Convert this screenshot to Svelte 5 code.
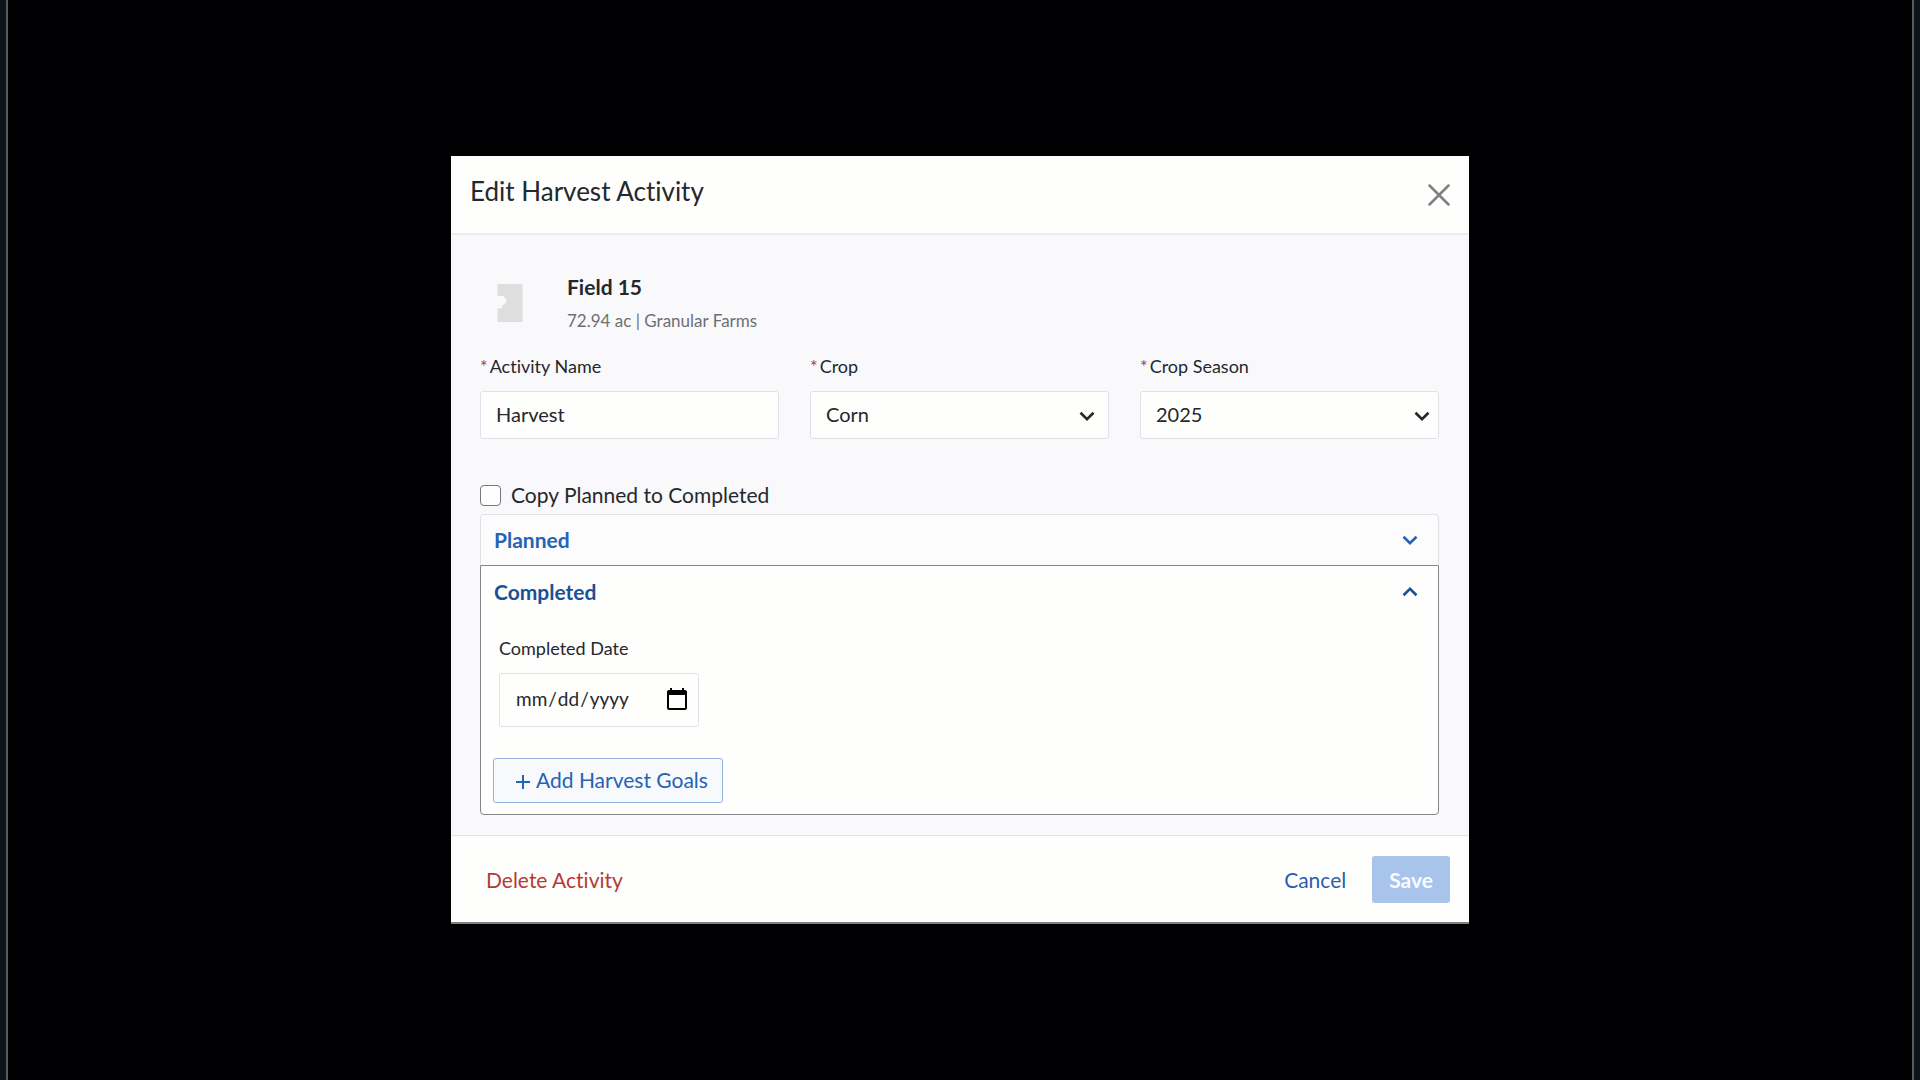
<script lang="ts">
  interface Props {
    fieldName?: string;
    fieldDetails?: string;
    onClose?: () => void;
    onSave?: () => void;
    onDelete?: () => void;
  }

  let {
    fieldName = "Field 15",
    fieldDetails = "72.94 ac | Granular Farms",
    onClose,
    onSave,
    onDelete,
  }: Props = $props();

  const crops = ["Corn", "Soybeans", "Wheat"];
  const seasons = ["2024", "2025", "2026"];

  let activityName = $state("Harvest");
  let crop = $state("Corn");
  let season = $state("2025");
  let copyPlanned = $state(false);
  let completedDate = $state("");
  let openSection = $state("completed");

  function toggle(section: string) {
    openSection = openSection === section ? "" : section;
  }
</script>

{#snippet chevron(up: boolean)}
  <svg class="chevron" width="18" height="12" viewBox="0 0 18 12" aria-hidden="true">
    <path d={up ? "M2.5 9.2 9 2.8l6.5 6.4" : "M2.5 2.8 9 9.2l6.5-6.4"} />
  </svg>
{/snippet}

<div class="page">
  <div class="backdrop">
    <div class="modal" role="dialog" aria-labelledby="modal-title">
      <header class="modal-header">
        <h1 id="modal-title">Edit Harvest Activity</h1>
        <button class="close" type="button" aria-label="Close" onclick={() => onClose?.()}>
          <svg width="22" height="22" viewBox="0 0 22 22" aria-hidden="true">
            <path d="M1.5 1.5l19 19M20.5 1.5l-19 19" />
          </svg>
        </button>
      </header>

      <div class="modal-body">
        <div class="field-info">
          <svg width="26" height="40" viewBox="0 0 26 40" aria-hidden="true">
            <path d="M.5 1h25v38H.5V25.500h4.500V22H7v-1.500h2V15H7v-2H.5z" />
          </svg>
          <div class="field-text">
            <h2>{fieldName}</h2>
            <p>{fieldDetails}</p>
          </div>
        </div>

        <div class="form-row">
          <div class="form-group">
            <label for="activity-name"><span class="required">*</span>Activity Name</label>
            <input id="activity-name" class="control" type="text" bind:value={activityName} />
          </div>
          <div class="form-group">
            <label for="crop"><span class="required">*</span>Crop</label>
            <div class="select inset">
              <select id="crop" class="control" bind:value={crop}>
                {#each crops as option}
                  <option value={option}>{option}</option>
                {/each}
              </select>
              {@render chevron(false)}
            </div>
          </div>
          <div class="form-group">
            <label for="season"><span class="required">*</span>Crop Season</label>
            <div class="select">
              <select id="season" class="control" bind:value={season}>
                {#each seasons as option}
                  <option value={option}>{option}</option>
                {/each}
              </select>
              {@render chevron(false)}
            </div>
          </div>
        </div>

        <div class="copy-row">
          <input id="copy-planned" type="checkbox" bind:checked={copyPlanned} />
          <label for="copy-planned">Copy Planned to Completed</label>
        </div>

        <section class="panel" class:open={openSection === "planned"}>
          <button class="panel-toggle" type="button" aria-expanded={openSection === "planned"} onclick={() => toggle("planned")}>
            Planned
            {@render chevron(openSection === "planned")}
          </button>
        </section>

        <section class="panel" class:open={openSection === "completed"}>
          <button class="panel-toggle" type="button" aria-expanded={openSection === "completed"} onclick={() => toggle("completed")}>
            Completed
            {@render chevron(openSection === "completed")}
          </button>
          {#if openSection === "completed"}
            <div class="panel-content">
              <div class="date-group">
                <label for="completed-date">Completed Date</label>
                <input id="completed-date" class="control date" type="date" bind:value={completedDate} />
              </div>
              <button class="add-goals" type="button">
                <svg width="16" height="16" viewBox="0 0 16 16" aria-hidden="true">
                  <path d="M8 1v14M1 8h14" />
                </svg>
                Add Harvest Goals
              </button>
            </div>
          {/if}
        </section>
      </div>

      <footer class="modal-footer">
        <button class="link danger" type="button" onclick={() => onDelete?.()}>Delete Activity</button>
        <div class="actions">
          <button class="link" type="button" onclick={() => onClose?.()}>Cancel</button>
          <button class="save" type="button" disabled onclick={() => onSave?.()}>Save</button>
        </div>
      </footer>
    </div>
  </div>
</div>

<style>
  :global(body) {
    background: #0e1417;
  }

  .page {
    padding: 0 6px;
    background: #0e1417;
    color: #25282b;
    font-family: Lato, "Open Sans", sans-serif;
    font-size: 21px;
    font-variant-ligatures: none;
    line-height: 24px;
  }

  .page * {
    box-sizing: border-box;
  }

  .backdrop {
    display: flex;
    align-items: center;
    justify-content: center;
    min-height: 100vh;
    border: solid #5a5a5a;
    border-width: 0 2px;
    background: #000002;
  }

  .modal {
    width: 100%;
    max-width: 1018px;
    border-bottom: 2px solid #7e8082;
    background: #fefefd;
  }

  button,
  input,
  select {
    margin: 0;
    font: inherit;
    color: inherit;
  }

  button {
    cursor: pointer;
  }

  svg path {
    fill: none;
    stroke: currentColor;
  }

  .modal-header {
    display: flex;
    align-items: flex-start;
    justify-content: space-between;
    padding: 20px 19px 26px;
    border-bottom: 2px solid #ececf0;
  }

  h1 {
    margin: 0;
    font-size: 26px;
    font-weight: 400;
    line-height: 31px;
  }

  .close {
    display: flex;
    padding: 8px 0 0;
    border: 0;
    background: none;
    color: #808080;
  }

  .close path {
    stroke-width: 2.5;
    stroke-linecap: round;
  }

  .modal-body {
    padding: 40px 30px 20px 29px;
    background: #f9f9fc;
  }

  .field-info {
    display: flex;
    gap: 44px;
    padding-left: 17px;
  }

  .field-info svg {
    margin-top: 8px;
  }

  .field-info path {
    fill: #dedede;
    stroke: none;
  }

  h2 {
    margin: 0;
    font-size: 21px;
    font-weight: 700;
    line-height: 24px;
  }

  .field-text p {
    margin: 12px 0 0;
    font-size: 17px;
    line-height: 20px;
    color: #6d7073;
  }

  .form-row {
    display: grid;
    grid-template-columns: repeat(3, 1fr);
    gap: 31px;
    margin-top: 25px;
  }

  .form-group label,
  .date-group label {
    display: block;
    margin-bottom: 15px;
    font-size: 18px;
    line-height: 20px;
  }

  .required {
    margin-right: 2px;
    color: #b3362f;
  }

  .control {
    display: block;
    width: 100%;
    height: 48px;
    padding: 0 15px 2px;
    border: 1px solid #dfe1e9;
    border-radius: 3px;
    background: #fefefd;
    font-size: 20px;
  }

  .select {
    position: relative;
  }

  select.control {
    appearance: none;
  }

  .chevron path {
    stroke-width: 2.6;
  }

  .select .chevron {
    position: absolute;
    top: 19px;
    right: 8px;
    pointer-events: none;
  }

  .select.inset .chevron {
    right: 13px;
  }

  .copy-row {
    display: flex;
    align-items: center;
    gap: 10px;
    margin: 44px 0 7px;
  }

  .copy-row input {
    appearance: none;
    width: 21px;
    height: 21px;
    border: 1px solid #76777a;
    border-radius: 4px;
    background: #fefefe;
  }

  .copy-row input:checked {
    background: #1f5fb8;
  }

  .panel {
    border: 1px solid #dfe1e9;
    border-bottom: 0;
    border-radius: 4px 4px 0 0;
    background: #fcfcfc;
    color: #2563b5;
  }

  .panel.open {
    border: 1px solid #85868a;
    border-radius: 0 0 4px 4px;
    background: #fefefd;
    color: #1d4f96;
  }

  .panel-toggle {
    display: flex;
    align-items: center;
    justify-content: space-between;
    width: 100%;
    height: 50px;
    padding: 0 19px 0 13px;
    border: 0;
    background: none;
    font-weight: 700;
  }

  .open .panel-toggle {
    height: 52px;
  }

  .panel-content {
    padding: 20px 12px 11px;
  }

  .date-group {
    width: 200px;
    margin: 0 0 31px 6px;
    color: #25282b;
  }

  .date {
    height: 54px;
    padding-right: 9px;
    font-size: 19px;
  }

  .date::-webkit-calendar-picker-indicator {
    width: 24px;
    height: 24px;
    margin: 0;
    padding: 0;
    background-size: 24px 24px;
  }

  .add-goals {
    display: flex;
    align-items: center;
    gap: 5px;
    height: 45px;
    padding: 0 14px 2px 21px;
    border: 1px solid #94b2de;
    border-radius: 3px;
    background: #f7f9fd;
    color: #2563b5;
  }

  .add-goals path {
    stroke-width: 2;
  }

  .add-goals svg {
    margin-top: 4px;
  }

  .modal-footer {
    display: flex;
    align-items: center;
    justify-content: space-between;
    padding: 20px 19px 19px 35px;
    border-top: 1px solid #e4e4ea;
  }

  .actions {
    display: flex;
    align-items: center;
    gap: 26px;
  }

  .link {
    padding: 0;
    border: 0;
    background: none;
    color: #2a5fae;
  }

  .link.danger {
    color: #b53a34;
  }

  .save {
    height: 47px;
    padding: 0 17px;
    border: 0;
    border-radius: 3px;
    background: #a8c4eb;
    color: #f8fbff;
    font-weight: 700;
  }
</style>
